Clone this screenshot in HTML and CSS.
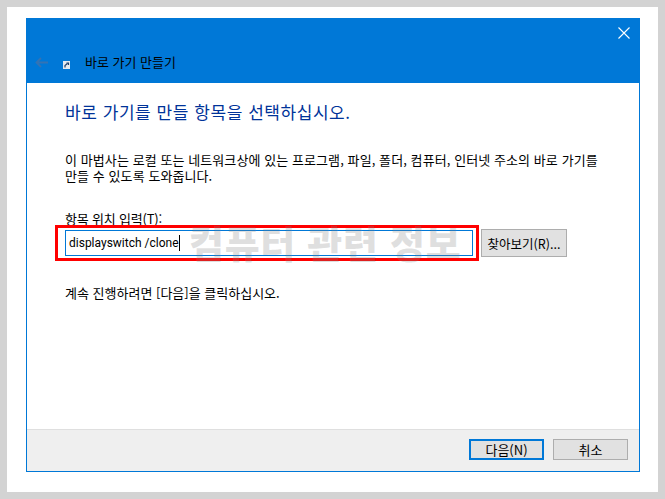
FILE: index.html
```html
<!DOCTYPE html>
<html lang="ko">
<head>
<meta charset="utf-8">
<title>바로 가기 만들기</title>
<link rel="stylesheet" href="styles.css">
</head>
<body>
<div class="frame">
  <div class="window">
    <header class="titlebar">
      <div class="close-row">
        <svg class="close" width="12" height="12" viewBox="0 0 12 12"><path d="M.5.5l11 11M11.5.5l-11 11" stroke="#fff" stroke-width="1.1" fill="none"/></svg>
      </div>
      <div class="nav-row">
        <svg class="back" width="13" height="11" viewBox="0 0 13 11"><path d="M13 5.500H1.500M6 1L1.500 5.500 6 10" stroke="#3473b4" stroke-width="1.800" fill="none"/></svg>
        <svg class="app-icon" width="7" height="8" viewBox="0 0 7 8"><rect width="7" height="8" fill="#e4e9ef"/><path d="M2 6.500V4.500L4.500 2.500M3.500 2h2v2" stroke="#20406a" stroke-width="1.200" fill="none"/></svg>
        <span class="title">바로 가기 만들기</span>
      </div>
    </header>
    <main class="content">
      <h1 class="heading">바로 가기를 만들 항목을 선택하십시오.</h1>
      <p class="intro">이 마법사는 로컬 또는 네트워크상에 있는 프로그램, 파일, 폴더, 컴퓨터, 인터넷 주소의 바로 가기를<br>만들 수 있도록 도와줍니다.</p>
      <label class="field-label">항목 위치 입력(T):</label>
      <div class="field-row">
        <div class="input"><span>displayswitch /clone</span><i class="caret"></i></div>
        <button class="btn browse">찾아보기(R)...</button>
        <div class="highlight"></div>
        <div class="watermark">컴퓨터 관련 정보</div>
      </div>
      <p class="continue">계속 진행하려면 [다음]을 클릭하십시오.</p>
    </main>
    <footer class="footer">
      <button class="btn primary">다음(N)</button>
      <button class="btn">취소</button>
    </footer>
  </div>
</div>
</body>
</html>
```
FILE: styles.css
```css
* { box-sizing: border-box; }
html, body { margin: 0; height: 100%; }
body {
  width: 665px;
  height: 499px;
  overflow: hidden;
  background: #fff;
  border: 7px solid #d3d3d3;
  font-family: "Noto Sans CJK KR", "Noto Sans", sans-serif;
  font-size: 13px;
  color: #000;
}
.frame { padding: 11px 18px 20px 19px; height: 100%; }
.window {
  width: 614px;
  height: 454px;
  display: flex;
  flex-direction: column;
  border: 1px solid #0078d7;
  border-top: 0;
  background: #fff;
}
.titlebar { height: 65px; margin: 0 -1px; background: #0078d7; padding: 9px 10px 0 8px; flex: none; }
.close-row { display: flex; justify-content: flex-end; height: 12px; }
.close { display: block; }
.nav-row { display: flex; align-items: center; margin-top: 13px; height: 20px; }
.back { margin: 0 0 0 1px; }
.app-icon { margin: 5px 0 0 15px; }
.title { margin-left: 15px; line-height: 20px; }
.content { flex: 1; padding: 0 0 0 38px; }
.heading { margin: 18px 0 0; font-size: 17px; font-weight: 400; line-height: 22px; color: #003399; letter-spacing: 0.55px; }
.intro { margin: 29px 0 0; line-height: 16px; letter-spacing: 0.08px; }
.field-label { display: block; margin-top: 27px; line-height: 16px; letter-spacing: -0.2px; }
.field-row { position: relative; display: flex; align-items: center; margin-top: 2px; height: 28px; }
.input {
  width: 408px;
  height: 26px;
  border: 1px solid #0078d7;
  padding: 0 0 0 3px;
  display: flex;
  align-items: center;
  font-family: Roboto, "Noto Sans", sans-serif;
  font-size: 12px;
  line-height: 22px;
}
.caret { width: 1px; height: 16px; background: #000; }
.btn {
  font: inherit;
  color: #000;
  width: 75px;
  height: 21px;
  padding: 0;
  border: 1px solid #adadad;
  background: #e1e1e1;
  line-height: 17px;
}
.browse { width: 86px; height: 28px; margin-left: 8px; font-size: 12.500px; }
.primary { border: 2px solid #0078d7; }
.highlight { position: absolute; left: -10px; top: -4px; width: 424px; height: 36px; border: 3px solid #f00; pointer-events: none; }
.watermark { position: absolute; left: 124px; top: -9px; font-size: 38px; font-weight: 900; line-height: 44px; color: rgba(130,130,130,.25); letter-spacing: 0.7px; white-space: nowrap; pointer-events: none; }
.continue { margin: 27px 0 0; line-height: 17px; }
.footer {
  height: 42px;
  flex: none;
  background: #efefef;
  border-top: 1px solid #dfdfdf;
  display: flex;
  justify-content: flex-end;
  gap: 9px;
  padding: 9px 11px 0 0;
}
```
